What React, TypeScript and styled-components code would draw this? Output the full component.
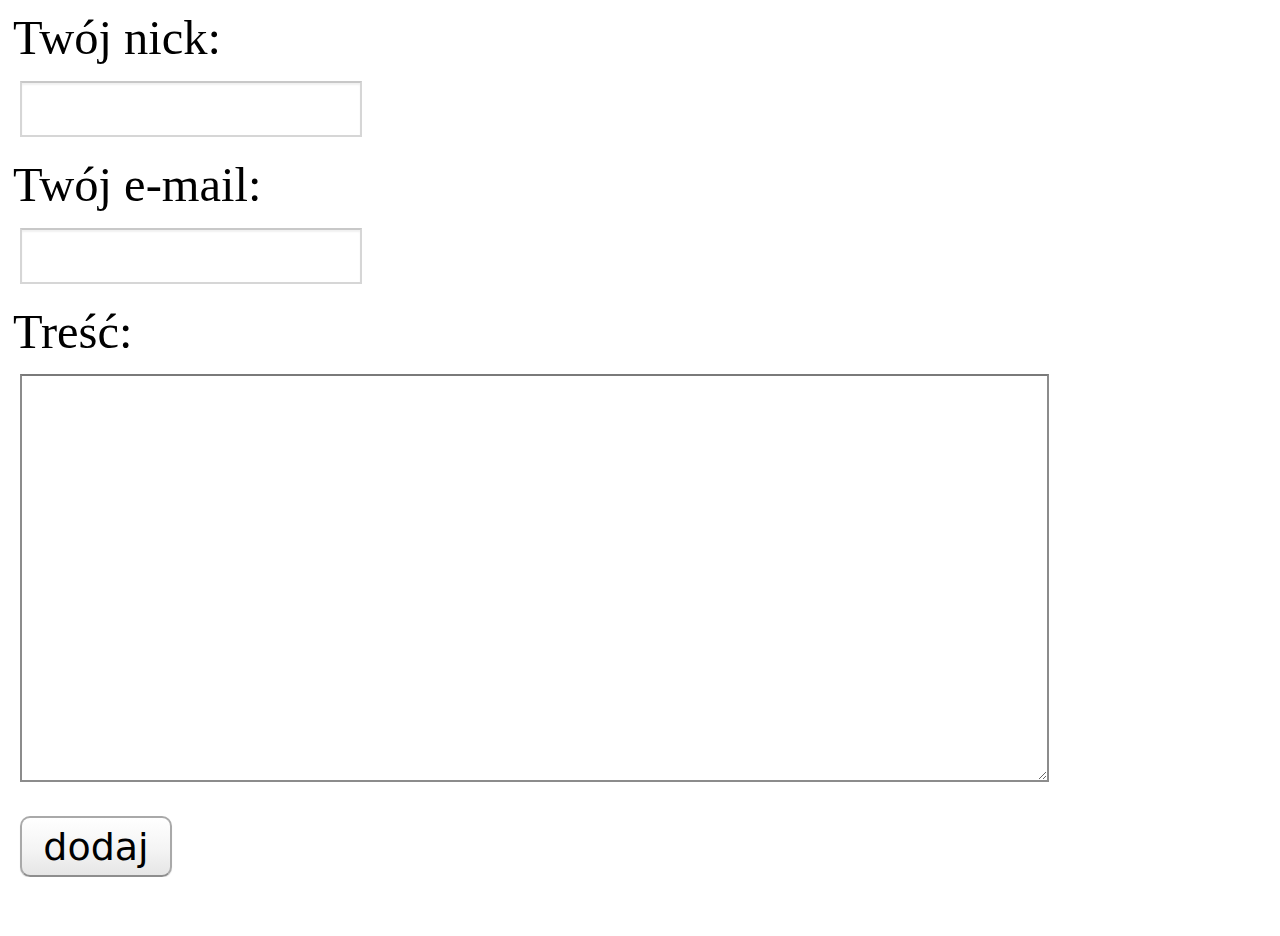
import styled, {createGlobalStyle} from "styled-components";

const GlobalStyle = createGlobalStyle`
    html, body {
        margin: 0;
        padding: 0;
        background: #ffffff;
    }
`

const Page = styled.div`
    padding: 10px 0 0 13px;
    font-family: "Liberation Serif", "Times New Roman", serif;
    color: #000000;
`

const CommentForm = styled.form`
    display: flex;
    flex-direction: column;
    align-items: flex-start;
`

const FieldLabel = styled.label`
    padding-top: 2px;
    font-size: 48.5px;
    line-height: 52px;
`

const TextInput = styled.input`
    box-sizing: border-box;
    width: 342px;
    height: 56px;
    margin: 17px 0 20px 7px;
    padding: 4px 8px;
    border: 2px solid #d6d6d6;
    border-top-color: #c8c8c8;
    box-shadow: inset 0 2px 2px rgba(0, 0, 0, 0.06);
    background: #ffffff;
    font-size: 28px;
    outline: none;
`

const MessageArea = styled.textarea`
    box-sizing: border-box;
    width: 1029px;
    height: 408px;
    margin: 16px 0 0 7px;
    padding: 4px;
    border: 2px solid #8c8c8c;
    border-top-color: #7a7a7a;
    background: #ffffff;
    font-size: 24px;
    outline: none;
`

const SubmitButton = styled.button`
    box-sizing: border-box;
    width: 152px;
    height: 61px;
    margin: 34px 0 0 7px;
    padding: 0;
    border: 2px solid #a9a9a9;
    border-bottom-color: #8e8e8e;
    border-radius: 10px;
    background: linear-gradient(#ffffff, #f4f4f4 55%, #e6e6e6);
    box-shadow: 0 1px 1px rgba(0, 0, 0, 0.12);
    font-family: "DejaVu Sans", "Lucida Grande", sans-serif;
    font-size: 38px;
    color: #000000;
    cursor: pointer;
`

function App() {
    return (
        <>
            <GlobalStyle/>
            <Page>
                <CommentForm onSubmit={(e) => e.preventDefault()}>
                    <FieldLabel htmlFor="nick">Twój nick:</FieldLabel>
                    <TextInput id="nick" type="text"/>
                    <FieldLabel htmlFor="email">Twój e-mail:</FieldLabel>
                    <TextInput id="email" type="text"/>
                    <FieldLabel htmlFor="tresc">Treść:</FieldLabel>
                    <MessageArea id="tresc"/>
                    <SubmitButton type="submit">dodaj</SubmitButton>
                </CommentForm>
            </Page>
        </>
    )
}

export default App;
